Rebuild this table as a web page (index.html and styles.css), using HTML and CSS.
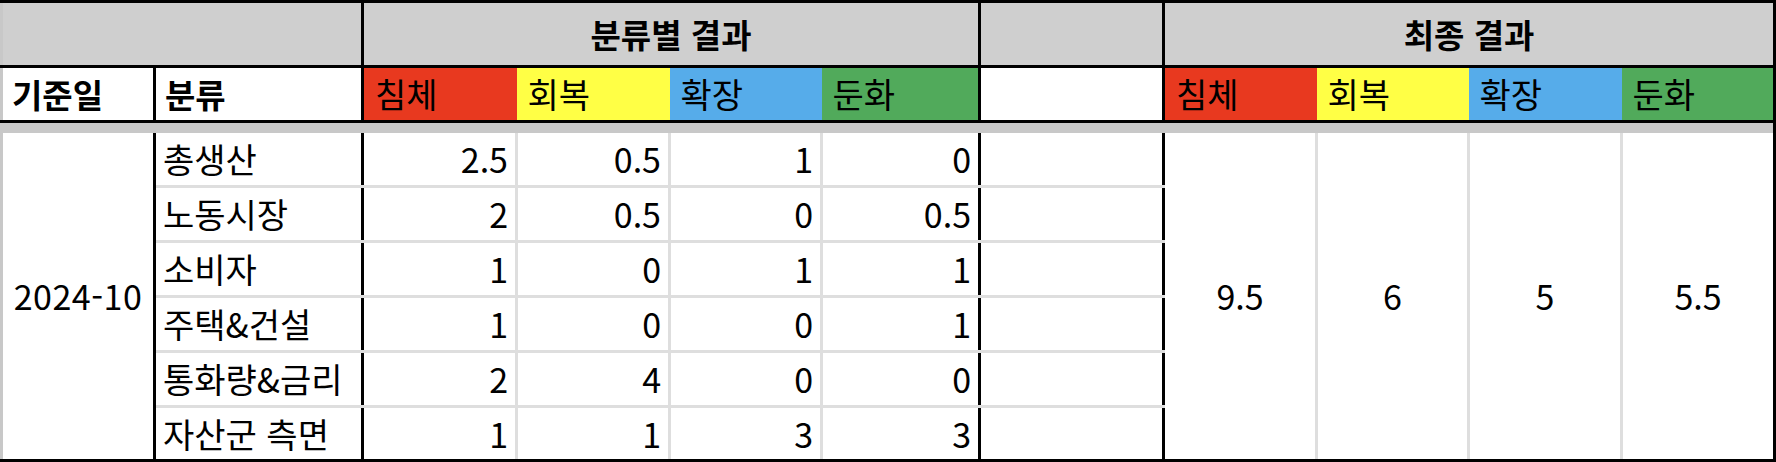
FILE: index.html
```html
<!DOCTYPE html>
<html lang="ko">
<head>
<meta charset="utf-8">
<title>분류별 결과</title>
<link rel="stylesheet" href="styles.css">
</head>
<body>
<table class="grid">
  <colgroup>
    <col class="w-date"><col class="w-name">
    <col class="w-c1"><col class="w-c2"><col class="w-c3"><col class="w-c4">
    <col class="w-blank">
    <col class="w-f1"><col class="w-f2"><col class="w-f3"><col class="w-f4">
  </colgroup>
  <thead>
    <tr class="r-top">
      <th colspan="2" class="edge"></th>
      <th colspan="4" class="group edge">분류별 결과</th>
      <th class="group edge"></th>
      <th colspan="4" class="group">최종 결과</th>
    </tr>
    <tr class="r-sub">
      <th class="label edge">기준일</th>
      <th class="label edge">분류</th>
      <th class="cat red">침체</th>
      <th class="cat yellow">회복</th>
      <th class="cat blue">확장</th>
      <th class="cat green edge">둔화</th>
      <th class="label edge"></th>
      <th class="cat red">침체</th>
      <th class="cat yellow">회복</th>
      <th class="cat blue">확장</th>
      <th class="cat green">둔화</th>
    </tr>
  </thead>
  <tbody>
    <tr class="gap"><td colspan="11"></td></tr>
    <tr class="row first">
      <td rowspan="6" class="date edge">2024-10</td>
      <td class="name edge">총생산</td>
      <td class="num">2.5</td><td class="num">0.5</td><td class="num">1</td><td class="num edge">0</td>
      <td class="blank edge"></td>
      <td rowspan="6" class="final">9.5</td>
      <td rowspan="6" class="final">6</td>
      <td rowspan="6" class="final">5</td>
      <td rowspan="6" class="final last">5.5</td>
    </tr>
    <tr class="row">
      <td class="name edge">노동시장</td>
      <td class="num">2</td><td class="num">0.5</td><td class="num">0</td><td class="num edge">0.5</td>
      <td class="blank edge"></td>
    </tr>
    <tr class="row">
      <td class="name edge">소비자</td>
      <td class="num">1</td><td class="num">0</td><td class="num">1</td><td class="num edge">1</td>
      <td class="blank edge"></td>
    </tr>
    <tr class="row">
      <td class="name edge">주택&amp;건설</td>
      <td class="num">1</td><td class="num">0</td><td class="num">0</td><td class="num edge">1</td>
      <td class="blank edge"></td>
    </tr>
    <tr class="row">
      <td class="name edge">통화량&amp;금리</td>
      <td class="num">2</td><td class="num">4</td><td class="num">0</td><td class="num edge">0</td>
      <td class="blank edge"></td>
    </tr>
    <tr class="row final-row">
      <td class="name edge">자산군 측면</td>
      <td class="num">1</td><td class="num">1</td><td class="num">3</td><td class="num edge">3</td>
      <td class="blank edge"></td>
    </tr>
  </tbody>
</table>
</body>
</html>
```
FILE: styles.css
```css
html, body {
  margin: 0;
  padding: 0;
  background: #ffffff;
}

body {
  font-family: "Noto Sans CJK KR", "Noto Sans", sans-serif;
  color: #000000;
}

.grid {
  width: 1776px;
  table-layout: fixed;
  border-collapse: collapse;
  border-top: 3px solid #000000;
  border-right: 3px solid #000000;
  border-bottom: 3px solid #000000;
  border-left: 3px solid #c8c8c8;
}

.w-date  { width: 153px; }
.w-name  { width: 208px; }
.w-c1    { width: 154px; }
.w-c2    { width: 153px; }
.w-c3    { width: 152px; }
.w-c4    { width: 158px; }
.w-blank { width: 184px; }
.w-f1    { width: 153px; }
.w-f2    { width: 152px; }
.w-f3    { width: 153px; }
.w-f4    { width: 153px; }

.grid th,
.grid td {
  padding: 0;
  font-size: 33px;
  line-height: 1;
  white-space: nowrap;
  overflow: hidden;
}

/* header row 1 */
.r-top th {
  height: 62px;
  background: #cfcfcf;
  font-weight: 700;
  text-align: center;
  border-bottom: 3px solid #000000;
}

/* header row 2 */
.r-sub th {
  height: 52px;
  text-align: left;
  padding-left: 9px;
  border-bottom: 3px solid #000000;
}

.r-sub .label {
  font-weight: 700;
  background: #ffffff;
}

.r-sub .cat {
  font-weight: 400;
  font-size: 34px;
  padding-left: 11px;
}

.red    { background: #e8391f; }
.yellow { background: #ffff45; }
.blue   { background: #56acea; }
.green  { background: #51aa5b; }

.grid .edge {
  border-right: 3px solid #000000;
}

/* grey band */
.gap td {
  height: 10px;
  background: #c8c8c8;
}

/* body rows */
.row td {
  height: 52px;
  border-bottom: 3px solid #dedede;
}

.row .num {
  text-align: right;
  padding-right: 7px;
  font-size: 34px;
  border-right: 3px solid #dedede;
}

.row .num.edge {
  border-right: 3px solid #000000;
}

.row .name {
  text-align: left;
  padding-left: 7px;
  font-size: 34px;
}

.row .date {
  text-align: center;
  vertical-align: middle;
  font-size: 34px;
  letter-spacing: 0.5px;
  border-bottom: 3px solid #000000;
}

.row .final {
  text-align: center;
  vertical-align: middle;
  font-size: 34px;
  border-right: 3px solid #dedede;
  border-bottom: 3px solid #000000;
}

.row .final.last {
  border-right: 3px solid #000000;
}

.final-row td {
  height: 51px;
  border-bottom: 3px solid #000000;
}
```
